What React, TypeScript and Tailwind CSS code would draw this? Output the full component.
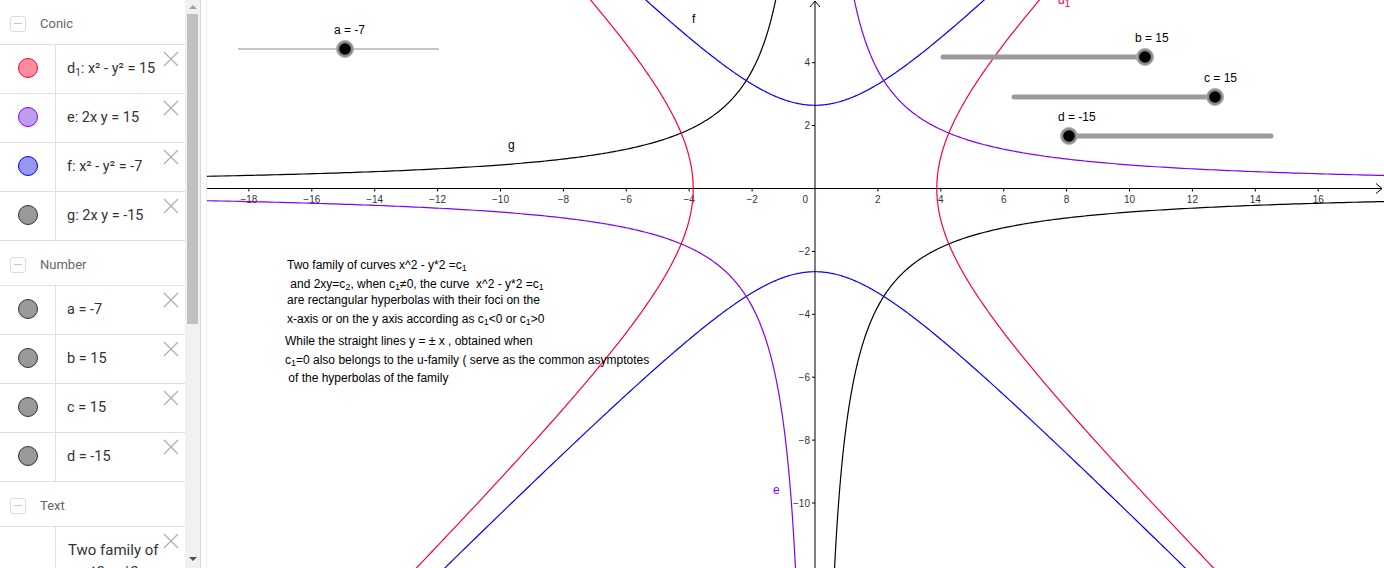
import React from "react";

const S = 31.45;
const OX = 608;
const OY = 188.5;
const X = (x: number) => OX + S * x;
const Y = (y: number) => OY - S * y;

function pathFrom(pts: [number, number][]) {
  return pts
    .map((p, i) => `${i === 0 ? "M" : "L"}${X(p[0]).toFixed(2)},${Y(p[1]).toFixed(2)}`)
    .join(" ");
}

function range(a: number, b: number, n: number) {
  const out: number[] = [];
  for (let i = 0; i <= n; i++) out.push(a + ((b - a) * i) / n);
  return out;
}

// x^2 - y^2 = 15
const r1 = Math.sqrt(15);
const d1Right = pathFrom(range(-2.6, 2.6, 500).map((u) => [r1 * Math.cosh(u), r1 * Math.sinh(u)]));
const d1Left = pathFrom(range(-2.6, 2.6, 500).map((u) => [-r1 * Math.cosh(u), r1 * Math.sinh(u)]));
// y^2 - x^2 = 7
const r2 = Math.sqrt(7);
const fTop = pathFrom(range(-2.8, 2.8, 500).map((u) => [r2 * Math.sinh(u), r2 * Math.cosh(u)]));
const fBot = pathFrom(range(-2.8, 2.8, 500).map((u) => [r2 * Math.sinh(u), -r2 * Math.cosh(u)]));
// xy = 7.5
const r3 = Math.sqrt(7.5);
const ePos = pathFrom(range(-3.2, 3.2, 600).map((u) => [r3 * Math.exp(u), 7.5 / (r3 * Math.exp(u))]));
const eNeg = pathFrom(range(-3.2, 3.2, 600).map((u) => [-r3 * Math.exp(u), -7.5 / (r3 * Math.exp(u))]));
// xy = -7.5
const gPos = pathFrom(range(-3.2, 3.2, 600).map((u) => [r3 * Math.exp(u), -7.5 / (r3 * Math.exp(u))]));
const gNeg = pathFrom(range(-3.2, 3.2, 600).map((u) => [-r3 * Math.exp(u), 7.5 / (r3 * Math.exp(u))]));

const xLabels = [-18, -16, -14, -12, -10, -8, -6, -4, -2, 2, 4, 6, 8, 10, 12, 14, 16];
const yLabels = [4, 2, -2, -4, -6, -8, -10];

const fmt = (n: number) => (n < 0 ? "\u2212" + Math.abs(n) : String(n));

function XIcon() {
  return (
    <svg width="16" height="16" viewBox="0 0 16 16" className="absolute right-[6px] top-[6px]">
      <path d="M1 1 L15 15 M15 1 L1 15" stroke="#b0b0b0" strokeWidth="1.4" fill="none" />
    </svg>
  );
}

function Header({ label }: { label: string }) {
  return (
    <div className="h-[45px] pt-[3px] flex items-center border-b border-[#e0e0e0] shrink-0">
      <div className="ml-[10px] w-[16px] h-[16px] border border-[#dcdcdc] rounded-[3px] flex items-center justify-center">
        <div className="w-[8px] h-[1.5px] bg-[#c8c8c8]" />
      </div>
      <span className="ml-[14px] text-[13px] text-[#666]" style={{ fontFamily: "Roboto, 'Noto Sans', sans-serif" }}>
        {label}
      </span>
    </div>
  );
}

function Row({ fill, stroke, children }: { fill: string; stroke: string; children: React.ReactNode }) {
  return (
    <div className="h-[49px] flex border-b border-[#e0e0e0] relative shrink-0">
      <div className="w-[56px] pb-[3px] border-r border-[#e0e0e0] flex items-center justify-center">
        <div
          className="w-[20px] h-[20px] rounded-full border"
          style={{ backgroundColor: fill, borderColor: stroke }}
        />
      </div>
      <div
        className="flex items-center pl-[11px] text-[14.5px] text-[#333]"
        style={{ fontFamily: "Roboto, 'Noto Sans', sans-serif" }}
      >
        {children}
      </div>
      <XIcon />
    </div>
  );
}

function SliderPoint({ cx, cy }: { cx: number; cy: number }) {
  return (
    <g>
      <circle cx={cx} cy={cy} r={8.5} fill="#8a8a8a" stroke="#b5b5b5" strokeWidth={1} />
      <circle cx={cx} cy={cy} r={5.8} fill="#000" />
    </g>
  );
}

const textLines: { left: number; top: number; node: React.ReactNode }[] = [
  { left: 287, top: 257, node: <>Two family of curves x^2 - y*2 =c<sub>1</sub></> },
  { left: 287, top: 276, node: <>&nbsp;and 2xy=c<sub>2</sub>, when c<sub>1</sub>≠0, the curve &nbsp;x^2 - y*2 =c<sub>1</sub></> },
  { left: 287, top: 292, node: <>are rectangular hyperbolas with their foci on the</> },
  { left: 287, top: 311, node: <>x-axis or on the y axis according as c<sub>1</sub>&lt;0 or c<sub>1</sub>&gt;0</> },
  { left: 285, top: 333, node: <>While the straight lines y = ± x , obtained when</> },
  { left: 285, top: 352, node: <>c<sub>1</sub>=0 also belongs to the u-family ( serve as the common asymptotes</> },
  { left: 285, top: 370, node: <>&nbsp;of the hyperbolas of the family</> },
];

export default function App() {
  return (
    <div className="w-[1384px] h-[568px] flex overflow-hidden bg-white">
      {/* Algebra view */}
      <div className="w-[185px] h-[568px] flex flex-col overflow-hidden shrink-0">
        <Header label="Conic" />
        <Row fill="#ff8c9f" stroke="#ff0033">
          <span>
            d<sub className="text-[10px]">1</sub>: x² - y² = 15
          </span>
        </Row>
        <Row fill="#c09cec" stroke="#7f00ff">
          <span>e: 2x y = 15</span>
        </Row>
        <Row fill="#9898ee" stroke="#0000ff">
          <span>f: x² - y² = -7</span>
        </Row>
        <Row fill="#999999" stroke="#333333">
          <span>g: 2x y = -15</span>
        </Row>
        <Header label="Number" />
        <Row fill="#999999" stroke="#333333">
          <span>a = -7</span>
        </Row>
        <Row fill="#999999" stroke="#333333">
          <span>b = 15</span>
        </Row>
        <Row fill="#999999" stroke="#333333">
          <span>c = 15</span>
        </Row>
        <Row fill="#999999" stroke="#333333">
          <span>d = -15</span>
        </Row>
        <Header label="Text" />
        <div className="h-[60px] flex relative shrink-0">
          <div className="w-[56px] border-r border-[#e0e0e0]" />
          <div
            className="pl-[12px] pt-[12px] text-[15px] leading-[22px] text-[#333]"
            style={{ fontFamily: "Roboto, 'Noto Sans', sans-serif" }}
          >
            Two family of
            <br />
            &nbsp;&nbsp;&nbsp;&nbsp;x^2 - y*2
          </div>
          <XIcon />
        </div>
      </div>

      {/* Scrollbar */}
      <div className="w-[15px] h-[568px] bg-[#f1f1f1] flex flex-col items-center shrink-0">
        <div className="h-[14px] flex items-center justify-center">
          <div className="w-0 h-0 border-l-[4px] border-r-[4px] border-b-[4px] border-l-transparent border-r-transparent border-b-[#a3a3a3]" />
        </div>
        <div className="w-[11px] h-[310px] bg-[#c1c1c1]" />
        <div className="flex-1" />
        <div className="h-[18px] flex items-center justify-center">
          <div className="w-0 h-0 border-l-[4px] border-r-[4px] border-t-[4px] border-l-transparent border-r-transparent border-t-[#505050]" />
        </div>
      </div>

      {/* Splitter */}
      <div className="w-[7px] h-[568px] border-l border-[#d6d6d6] shrink-0 flex">
        <div className="flex-1" />
        <div className="w-[1px] bg-[#ededed]" />
      </div>

      {/* Graphics view */}
      <div className="relative flex-1 h-[568px] overflow-hidden">
        <svg width="1177" height="568" className="absolute left-0 top-0" style={{ fontFamily: "'Liberation Sans', Arial, sans-serif" }}>
          {/* axes */}
          <line x1={0} y1={OY} x2={1175} y2={OY} stroke="#000" strokeWidth={1} />
          <path d={`M1169,${OY - 5} L1175,${OY} L1169,${OY + 5}`} stroke="#000" fill="none" strokeWidth={1} />
          <line x1={OX} y1={568} x2={OX} y2={1} stroke="#000" strokeWidth={1} />
          <path d={`M${OX - 5},7 L${OX},1 L${OX + 5},7`} stroke="#000" fill="none" strokeWidth={1} />
          {xLabels.map((v) => (
            <g key={"x" + v}>
              <line x1={X(v)} y1={OY} x2={X(v)} y2={OY + 3} stroke="#000" strokeWidth={1} />
              <text x={X(v)} y={OY + 14.5} fontSize={10} fill="#333" textAnchor="middle">
                {fmt(v)}
              </text>
            </g>
          ))}
          <text x={OX - 7} y={OY + 14.5} fontSize={10} fill="#333" textAnchor="end">
            0
          </text>
          {yLabels.map((v) => (
            <g key={"y" + v}>
              <line x1={OX - 3} y1={Y(v)} x2={OX} y2={Y(v)} stroke="#000" strokeWidth={1} />
              <text x={OX - 5} y={Y(v) + 3.5} fontSize={10} fill="#333" textAnchor="end">
                {fmt(v)}
              </text>
            </g>
          ))}

          {/* curves */}
          <g fill="none" strokeWidth={1.2}>
            <path d={gPos} stroke="#000" />
            <path d={gNeg} stroke="#000" />
            <path d={fTop} stroke="#0000ff" />
            <path d={fBot} stroke="#0000ff" />
            <path d={ePos} stroke="#7f00ff" />
            <path d={eNeg} stroke="#7f00ff" />
            <path d={d1Right} stroke="#ff0033" />
            <path d={d1Left} stroke="#ff0033" />
          </g>

          {/* curve labels */}
          <text x={485} y={23} fontSize={12} fill="#000">f</text>
          <text x={301} y={149} fontSize={12} fill="#000">g</text>
          <text x={566} y={494} fontSize={12} fill="#7f00ff">e</text>
          <text x={851} y={4} fontSize={12} fill="#ff0033">
            d<tspan fontSize={10} dy={3}>1</tspan>
          </text>

          {/* sliders */}
          <line x1={31} y1={49} x2={232} y2={49} stroke="#8c8c8c" strokeWidth={1} />
          <SliderPoint cx={138} cy={49} />
          <text x={127} y={34} fontSize={12} fill="#000">a = -7</text>

          <line x1={736} y1={57} x2={938} y2={57} stroke="#9a9a9a" strokeWidth={5} strokeLinecap="round" />
          <SliderPoint cx={938} cy={57} />
          <text x={928} y={42} fontSize={12} fill="#000">b = 15</text>

          <line x1={807} y1={97} x2={1008} y2={97} stroke="#9a9a9a" strokeWidth={5} strokeLinecap="round" />
          <SliderPoint cx={1008} cy={97} />
          <text x={997} y={82} fontSize={12} fill="#000">c = 15</text>

          <line x1={862} y1={136} x2={1064} y2={136} stroke="#9a9a9a" strokeWidth={5} strokeLinecap="round" />
          <SliderPoint cx={862} cy={136} />
          <text x={851} y={121} fontSize={12} fill="#000">d = -15</text>
        </svg>

        {/* text object */}
        {textLines.map((l, i) => (
          <div
            key={i}
            className="absolute whitespace-nowrap text-[12px] leading-[16px] text-black"
            style={{ left: l.left - 207, top: l.top, fontFamily: "'Liberation Sans', Arial, sans-serif" }}
          >
            {l.node}
          </div>
        ))}
      </div>
    </div>
  );
}
